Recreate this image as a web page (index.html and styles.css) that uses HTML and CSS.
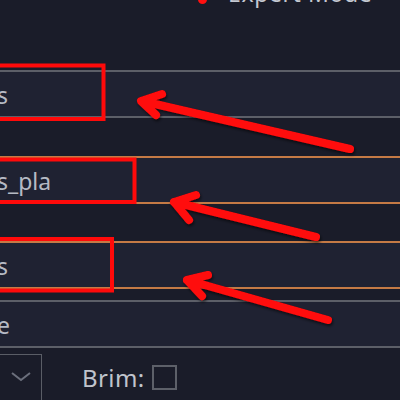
FILE: index.html
```html
<!DOCTYPE html>
<html>
<head>
<meta charset="utf-8">
<link rel="stylesheet" href="styles.css">
</head>
<body>
<div class="page">
  <div class="header">
    <span class="dot"></span>
    <span class="mode">Expert Mode</span>
  </div>
  <div class="field grey first"><span class="val">s</span></div>
  <div class="field orange second"><span class="val">s_pla</span></div>
  <div class="field orange third"><span class="val">s</span></div>
  <div class="field grey fourth"><span class="val">e</span></div>
  <div class="bottom">
    <div class="combo">
      <svg class="chev" width="20" height="10" viewBox="0 0 20 10"><path d="M1 1 L10 8 L19 1" fill="none" stroke="#6b6f7c" stroke-width="2"/></svg>
    </div>
    <span class="label">Brim:</span>
    <span class="check"></span>
  </div>
  <svg class="notes" width="400" height="400" viewBox="0 0 400 400">
    <defs>
      <filter id="sh" x="-10%" y="-10%" width="120%" height="130%">
        <feDropShadow dx="1" dy="2" stdDeviation="1.5" flood-color="#000" flood-opacity="0.6"/>
      </filter>
    </defs>
    <g fill="none" stroke="#ff0a0a" stroke-width="4">
      <rect x="-6" y="65.5" width="109.5" height="53.5"/>
      <rect x="-6" y="159.5" width="140.5" height="42.5"/>
      <rect x="-6" y="239" width="118" height="51.5"/>
    </g>
    <g fill="none" stroke="#ff0a0a" stroke-width="8" stroke-linecap="round" stroke-linejoin="round" filter="url(#sh)">
      <path d="M350 149 L142 101 M162 94 L141 101 L156 115"/>
      <path d="M316 237 L174 202 M196 195 L174 202 L189 220"/>
      <path d="M328 320 L187 280 M208 275 L187 280 L202 296"/>
    </g>
  </svg>
</div>
</body>
</html>
```

FILE: styles.css
```css
html, body {
  margin: 0;
  padding: 0;
  background: #1a1c29;
}
body {
  width: 400px;
  height: 400px;
  overflow: hidden;
  font-family: "Noto Sans", "Open Sans", sans-serif;
  font-size: 23px;
  color: #b6bac4;
}
.page {
  position: relative;
  width: 400px;
  height: 400px;
  overflow: hidden;
  display: flex;
  flex-direction: column;
}
.header {
  height: 70px;
  flex: none;
  display: flex;
  align-items: flex-start;
  padding-left: 198px;
  box-sizing: border-box;
}
.dot {
  width: 9px;
  height: 9px;
  margin-top: -5px;
  border-radius: 50%;
  background: #ff1010;
  transform: rotate(45deg);
}
.mode {
  margin-left: 21px;
  margin-top: -23px;
  line-height: 32px;
  color: #c4c8d1;
  letter-spacing: 0.6px;
}
.field {
  flex: none;
  height: 48px;
  box-sizing: border-box;
  background: #1f2232;
  display: flex;
  align-items: center;
}
.field.grey {
  border-top: 2px solid #5c5f68;
  border-bottom: 2px solid #5c5f68;
}
.field.orange {
  border-top: 2px solid #c47a45;
  border-bottom: 2px solid #c47a45;
}
.second { margin-top: 38px; }
.third { margin-top: 37px; }
.fourth { margin-top: 11px; }
.val {
  margin-left: -3px;
  margin-top: 2px;
  line-height: 30px;
}
.bottom {
  flex: none;
  margin-top: 6px;
  height: 46px;
  display: flex;
  align-items: center;
}
.combo {
  width: 44px;
  height: 60px;
  margin-left: -2px;
  align-self: flex-start;
  border: 1.5px solid #5a5d66;
  box-sizing: border-box;
  display: flex;
  justify-content: center;
  padding-top: 17px;
  padding-left: 2px;
}
.chev { display: block; }
.label {
  margin-left: 40px;
  line-height: 30px;
  margin-top: 2px;
  color: #c0c4cd;
  font-size: 24px;
  letter-spacing: 0.4px;
}
.check {
  width: 25px;
  height: 25px;
  box-sizing: border-box;
  margin-left: 7px;
  border: 2px solid #5d6069;
}
.notes {
  position: absolute;
  left: 0;
  top: 0;
}
```
